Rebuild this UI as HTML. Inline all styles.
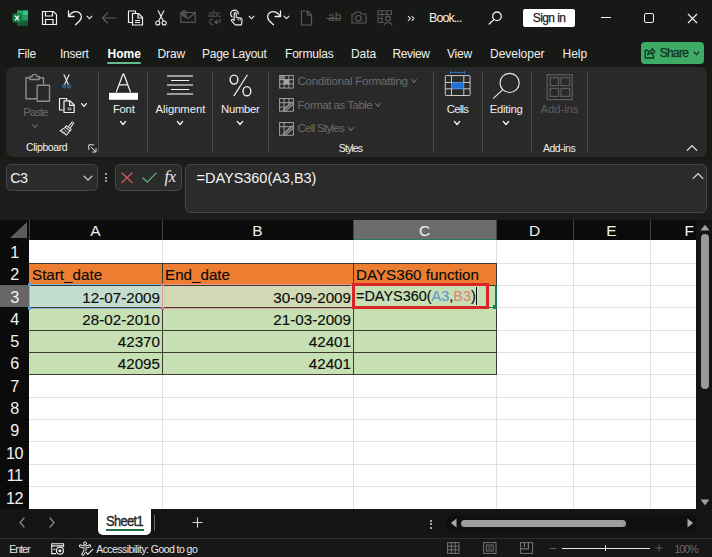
<!DOCTYPE html>
<html><head><meta charset="utf-8">
<style>
*{margin:0;padding:0;box-sizing:border-box}
html,body{width:712px;height:557px;overflow:hidden;background:#181a16;font-family:"Liberation Sans",sans-serif;}
#root{position:relative;width:712px;height:557px;overflow:hidden;background:#181a16;color:#fff}
.abs{position:absolute}
.t{position:absolute;white-space:nowrap;line-height:1}
/* title bar */
#title{left:0;top:0;width:712px;height:38px;background:#171916}
#tabs{left:0;top:38px;width:712px;height:30px;background:#171916}
.tab{font-size:13px;color:#f0f0f0;top:48px}
#ribbon{left:6px;top:67px;width:701px;height:90px;background:#292929;border-radius:7px}
.sep{position:absolute;width:1px;background:#4a4a4a;top:74px;height:81px}
.glabel{font-size:11px;color:#f0f0f0;top:143px}
.blabel{font-size:12px;color:#f0f0f0}
.dim{color:#6f6f6f}
/* formula bar */
#fbar{left:0;top:160px;width:712px;height:60px;background:#1c1d1a}
.fbox{position:absolute;background:#2b2b2b;border:1px solid #454545;border-radius:5px}
/* grid */
#grid{left:0;top:220px;width:696px;height:289px;background:#fff}
#colhdr{left:0;top:220px;width:712px;height:20px;background:#0b0b0b}
#rowhdr{left:0;top:240px;width:29px;height:269px;background:#0b0b0b}
.ch{position:absolute;top:220px;height:20px;color:#f2f2f2;font-size:15.5px;text-align:center;line-height:22px}
.rh{position:absolute;left:0;width:29px;color:#f2f2f2;font-size:16.2px;letter-spacing:-0.6px;text-align:center;line-height:22px;height:22px}
.vl{position:absolute;width:1px;background:#e0e0e0;top:240px;height:269px}
.hl{position:absolute;height:1px;background:#e0e0e0;left:29px;width:667px}
.cell{position:absolute;font-size:15.2px;color:#0c0c0c;-webkit-text-stroke-width:0.15px;line-height:22px;height:22px;white-space:nowrap}
#vscroll{left:696px;top:220px;width:16px;height:290px;background:#141414}
#sheetbar{left:0;top:509px;width:712px;height:29px;background:#141512}
#status{left:0;top:538px;width:712px;height:19px;background:#171717;border-top:1px solid #2e2e2e}
</style></head><body>
<div id="root">
<div id="title" class="abs"></div>
<div id="tabs" class="abs"></div>
<div id="ribbon" class="abs"></div>
<div id="fbar" class="abs"></div>
<div id="grid" class="abs"></div>
<div id="colhdr" class="abs"></div>
<div id="rowhdr" class="abs"></div>
<div id="vscroll" class="abs"></div>
<div id="sheetbar" class="abs"></div>
<div id="status" class="abs"></div>
<!--TITLE-->
<!-- excel logo -->
<svg class="abs" style="left:12px;top:10px" width="17" height="16" viewBox="0 0 17 16">
<rect x="5" y="0.5" width="11" height="15" rx="1" fill="#1d6f42"/>
<rect x="10.5" y="0.5" width="5.5" height="5" fill="#33c481"/><rect x="5" y="0.5" width="5.5" height="5" fill="#21a366"/>
<rect x="5" y="5.5" width="5.5" height="5" fill="#107c41"/><rect x="10.5" y="5.5" width="5.5" height="5" fill="#21a366"/>
<rect x="5" y="10.5" width="11" height="5" fill="#185c37"/>
<rect x="0.5" y="3.5" width="9" height="9" rx="1" fill="#107c41"/>
<path d="M3 5.6 L7 10.4 M7 5.6 L3 10.4" stroke="#fff" stroke-width="1.3" fill="none"/>
</svg>
<!-- save -->
<svg class="abs" style="left:41px;top:10px" width="17" height="16" viewBox="0 0 17 16" fill="none" stroke="#f0f0f0" stroke-width="1.2">
<path d="M1.5 1.5 H12.5 L15.5 4.5 V14.5 H1.5 Z"/><path d="M4.5 1.5 V6 H11.5 V1.5"/><path d="M4.5 14.5 V9.5 H12 V14.5"/>
</svg>
<!-- undo -->
<svg class="abs" style="left:67px;top:9px" width="17" height="17" viewBox="0 0 17 17" fill="none" stroke="#f0f0f0" stroke-width="1.3" stroke-linecap="round" stroke-linejoin="round">
<path d="M1.5 2 V7.5 H7"/><path d="M1.8 7.3 C4 3.5 8 1.5 11.5 3.2 C15 5 15.3 9.3 12.5 12 L8.5 15.8"/>
</svg>
<svg class="abs" style="left:86px;top:15px" width="7" height="5" viewBox="0 0 7 5" fill="none" stroke="#e0e0e0" stroke-width="1.2"><path d="M0.8 0.8 L3.5 3.6 L6.2 0.8"/></svg>
<!-- back arrow dim -->
<svg class="abs" style="left:101px;top:12px" width="16" height="12" viewBox="0 0 16 12" fill="none" stroke="#5a5a5a" stroke-width="1.2" stroke-linecap="round" stroke-linejoin="round"><path d="M15 6 H1.5 M6.5 1 L1.5 6 L6.5 11"/></svg>
<!-- copy -->
<svg class="abs" style="left:127px;top:10px" width="17" height="16" viewBox="0 0 17 16" fill="none" stroke="#f0f0f0" stroke-width="1.2" stroke-linejoin="round">
<path d="M5.5 12.5 H1.5 V1 H8.5 V3"/><path d="M5.5 3.5 H11.5 L15.5 7.5 V15 H5.5 Z" fill="#171916"/><path d="M11 3.8 V8 H15.2"/><path d="M8 10.5 H13 M8 12.5 H13" stroke-width="1"/>
</svg>
<!-- scissors -->
<svg class="abs" style="left:155px;top:10px" width="12" height="16" viewBox="0 0 12 16" fill="none" stroke="#f0f0f0" stroke-width="1.1" stroke-linecap="round">
<path d="M3.2 0.8 L8.3 11 M8.8 0.8 L3.7 11"/><circle cx="2.8" cy="13" r="2"/><circle cx="9.2" cy="13" r="2"/>
</svg>
<!-- mail dim -->
<svg class="abs" style="left:180px;top:10px" width="16" height="13" viewBox="0 0 16 13" fill="none" stroke="#585858" stroke-width="1.2">
<rect x="0.8" y="2.5" width="14.4" height="9.8"/><path d="M1 3 L8 8.5 L15 3"/><path d="M2.5 6.5 V2.5 C2.5 0 6 0 6 2.5 V6 C6 7.5 4 7.5 4 6 V3"/>
</svg>
<!-- abc dim -->
<div class="t" style="left:208px;top:10px;font-size:9px;color:#585858;letter-spacing:-0.6px">abc</div>
<svg class="abs" style="left:208px;top:18px" width="13" height="8" viewBox="0 0 13 8" fill="none" stroke="#585858" stroke-width="1.1" stroke-linecap="round"><path d="M4.5 1.2 C1 1 1 6.5 4.5 6.5 M12 1 V4 H7 M9 2 L7 4 L9 6"/></svg>
<!-- touch -->
<svg class="abs" style="left:229px;top:9px" width="15" height="17" viewBox="0 0 15 17" fill="none" stroke="#f0f0f0" stroke-width="1.15" stroke-linecap="round" stroke-linejoin="round">
<path d="M3.2 8 C1 6.5 1 2.5 3.8 1.5 C6.5 0.5 9.5 2.2 9.3 5"/>
<path d="M5.2 11.5 V4.6 C5.2 3.2 7.2 3.2 7.2 4.6 V8.2 L11.6 9 C12.8 9.3 13.3 10 13.1 11.2 L12.4 15.8 H6.3 L2.6 11.8 C2 10.8 3.2 9.8 4.2 10.6 Z"/>
<path d="M9.2 9 V11 M11.2 9.4 V11.2" stroke-width="0.9"/>
</svg>
<svg class="abs" style="left:248px;top:15px" width="7" height="5" viewBox="0 0 7 5" fill="none" stroke="#e0e0e0" stroke-width="1.2"><path d="M0.8 0.8 L3.5 3.6 L6.2 0.8"/></svg>
<!-- redo -->
<svg class="abs" style="left:265px;top:9px" width="17" height="17" viewBox="0 0 17 17" fill="none" stroke="#f0f0f0" stroke-width="1.3" stroke-linecap="round" stroke-linejoin="round">
<path d="M15.5 2 V7.5 H10"/><path d="M15.2 7.3 C13 3.5 9 1.5 5.5 3.2 C2 5 1.7 9.3 4.5 12 L8.5 15.8"/>
</svg>
<svg class="abs" style="left:283px;top:15px" width="7" height="5" viewBox="0 0 7 5" fill="none" stroke="#e0e0e0" stroke-width="1.2"><path d="M0.8 0.8 L3.5 3.6 L6.2 0.8"/></svg>
<!-- new doc dim -->
<svg class="abs" style="left:300px;top:10px" width="13" height="16" viewBox="0 0 13 16" fill="none" stroke="#585858" stroke-width="1.2" stroke-linejoin="round"><path d="M1.5 1 H7.5 L11.5 5 V15 H1.5 Z"/><path d="M7.3 1.2 V5.2 H11.3"/></svg>
<!-- ab strike dim -->
<div class="t" style="left:328px;top:11px;font-size:12px;color:#585858">ab</div>
<div class="abs" style="left:326px;top:18px;width:15px;height:1px;background:#585858"></div>
<!-- camera dim -->
<svg class="abs" style="left:351px;top:11px" width="16" height="13" viewBox="0 0 16 13" fill="none" stroke="#585858" stroke-width="1.2" stroke-linejoin="round"><path d="M1 3 H4 L5 1 H9 L10 3 H15 V12 H1 Z"/><circle cx="7.5" cy="7.3" r="2.8"/></svg>
<!-- table person dim -->
<svg class="abs" style="left:377px;top:10px" width="16" height="16" viewBox="0 0 16 16" fill="none" stroke="#585858" stroke-width="1.1"><path d="M7 12.5 H1 V0.8 H14.5 V5"/><path d="M1 4.5 H14.5 M1 8.5 H6 M5 0.8 V12.5 M9.8 0.8 V4.5"/><circle cx="11" cy="8.5" r="2.4"/><path d="M7 15.5 C7.5 11.5 14.5 11.5 15 15.5"/></svg>
<!-- chevrons -->
<svg class="abs" style="left:407px;top:15px" width="9" height="7" viewBox="0 0 9 7" fill="none" stroke="#e8e8e8" stroke-width="1.1"><path d="M1 1 L3.3 3.5 L1 6 M4.6 1 L6.9 3.5 L4.6 6"/></svg>
<div class="t" style="left:429px;top:12px;font-size:12.5px;color:#f0f0f0;letter-spacing:-0.92px;">Book...</div>
<!-- search -->
<svg class="abs" style="left:488px;top:11px" width="15" height="14" viewBox="0 0 15 14" fill="none" stroke="#f0f0f0" stroke-width="1.3" stroke-linecap="round"><circle cx="9" cy="5.3" r="4.3"/><path d="M5.8 8.6 L1.2 13"/></svg>
<!-- sign in -->
<div class="abs" style="left:523px;top:9px;width:52px;height:18px;background:#fff;border-radius:2px"></div>
<div class="t" style="left:532.8px;top:12.3px;font-size:12px;color:#1e1e1e;letter-spacing:-0.60px;-webkit-text-stroke:0.25px #1e1e1e;">Sign in</div>
<!-- window controls -->
<div class="abs" style="left:601px;top:17px;width:10px;height:1px;background:#f0f0f0"></div>
<div class="abs" style="left:644px;top:13px;width:10px;height:10px;border:1.2px solid #f0f0f0;border-radius:2px"></div>
<svg class="abs" style="left:687px;top:13px" width="11" height="11" viewBox="0 0 11 11" fill="none" stroke="#f0f0f0" stroke-width="1.2"><path d="M1 1 L10 10 M10 1 L1 10"/></svg>

<!--/TITLE-->
<!--TABS-->
<div class="t" style="left:17.5px;top:48.3px;font-size:12px;color:#f0f0f0;letter-spacing:-0.21px;">File</div>
<div class="t" style="left:60px;top:48.3px;font-size:12px;color:#f0f0f0;letter-spacing:-0.25px;">Insert</div>
<div class="t" style="left:157.5px;top:48.3px;font-size:12px;color:#f0f0f0;letter-spacing:-0.13px;">Draw</div>
<div class="t" style="left:202px;top:48.3px;font-size:12px;color:#f0f0f0;letter-spacing:-0.26px;">Page Layout</div>
<div class="t" style="left:285px;top:48.3px;font-size:12px;color:#f0f0f0;letter-spacing:-0.19px;">Formulas</div>
<div class="t" style="left:351px;top:48.3px;font-size:12px;color:#f0f0f0;letter-spacing:-0.09px;">Data</div>
<div class="t" style="left:392.5px;top:48.3px;font-size:12px;color:#f0f0f0;letter-spacing:-0.39px;">Review</div>
<div class="t" style="left:447px;top:48.3px;font-size:12px;color:#f0f0f0;letter-spacing:-0.20px;">View</div>
<div class="t" style="left:490px;top:48.3px;font-size:12px;color:#f0f0f0;letter-spacing:-0.02px;">Developer</div>
<div class="t" style="left:562.5px;top:48.3px;font-size:12px;color:#f0f0f0;letter-spacing:-0.04px;">Help</div>
<div class="t" style="left:107.5px;top:48.3px;font-size:12px;color:#ffffff;font-weight:bold;letter-spacing:0.04px;">Home</div>
<div class="abs" style="left:107px;top:62px;width:34px;height:2px;background:#63bd8c;border-radius:1px"></div>
<div class="abs" style="left:640.5px;top:42px;width:63px;height:21.5px;background:#3eab67;border-radius:4px"></div>
<svg class="abs" style="left:644px;top:47px" width="12" height="12" viewBox="0 0 12 12" fill="none" stroke="#10331f" stroke-width="1.3" stroke-linejoin="round" stroke-linecap="round"><path d="M4 3.5 H1.2 V11 H9.5 V8.5"/><path d="M3.8 8 C4 5 6 3.6 8 3.6 V1.5 L11 4.6 L8 7.6 V5.6 C6.3 5.6 5 6.2 3.8 8 Z"/></svg>
<div class="t" style="left:659.8px;top:47.3px;font-size:12px;color:#10331f;letter-spacing:-0.70px;-webkit-text-stroke:0.3px #10331f;">Share</div>
<svg class="abs" style="left:692.5px;top:51px" width="7" height="5" viewBox="0 0 7 5" fill="none" stroke="#10331f" stroke-width="1.3"><path d="M0.8 0.8 L3.5 3.6 L6.2 0.8"/></svg>
<!--/TABS-->
<!--RIBBON-->
<div class="sep" style="left:98px;top:71px;height:81px"></div>
<div class="sep" style="left:147px;top:71px;height:81px"></div>
<div class="sep" style="left:212px;top:71px;height:81px"></div>
<div class="sep" style="left:268px;top:71px;height:81px"></div>
<div class="sep" style="left:433px;top:71px;height:81px"></div>
<div class="sep" style="left:482px;top:71px;height:81px"></div>
<div class="sep" style="left:531px;top:71px;height:81px"></div>
<div class="sep" style="left:587px;top:71px;height:81px"></div>
<svg class="abs" style="left:24px;top:73px" width="27" height="30" viewBox="0 0 27 30" fill="none" stroke="#8c8c8c" stroke-width="1.4" stroke-linejoin="round"><path d="M13 25.8 H2 V4.8 H6 M15 4.8 H19.5 V11.5"/><path d="M5.8 6.5 V3.5 H8.2 C8.2 0.6 12.8 0.6 12.8 3.5 H15.2 V6.5 Z"/><rect x="13.2" y="12.2" width="12.3" height="16" fill="#292929"/></svg>
<div class="t" style="left:23.3px;top:106.8px;font-size:11.3px;color:#6a6a6a;letter-spacing:-0.96px;">Paste</div>
<svg class="abs" style="left:30.799999999999997px;top:123px" width="8" height="6" viewBox="0 0 8 6" fill="none" stroke="#6a6a6a" stroke-width="1.1" stroke-linecap="round" stroke-linejoin="round"><path d="M1.7000000000000002 1.7 L4 4.3 L6.3 1.7"/></svg>
<svg class="abs" style="left:61px;top:74px" width="11" height="15" viewBox="0 0 11 15" fill="none" stroke-linecap="round"><path d="M3 0.8 L7.4 10.6 M8 0.8 L3.6 10.6" stroke="#f0f0f0" stroke-width="1.1"/><circle cx="3" cy="12.4" r="1.6" stroke="#3b86c8" stroke-width="1"/><circle cx="8" cy="12.4" r="1.6" stroke="#3b86c8" stroke-width="1"/></svg>
<svg class="abs" style="left:58px;top:96.5px" width="18" height="17" viewBox="0 0 18 17" fill="none" stroke="#f0f0f0" stroke-width="1.2" stroke-linejoin="round"><path d="M5.8 13 H1.5 V1.5 H8.8 V3.4"/><path d="M6 3.8 H12 L16.2 8 V15.5 H6 Z" fill="#292929"/><path d="M11.6 4 V8.4 H16"/><rect x="9.5" y="10.5" width="4" height="3" fill="#8c8c8c" stroke="none"/></svg>
<svg class="abs" style="left:79.7px;top:102.2px" width="8" height="6" viewBox="0 0 8 6" fill="none" stroke="#f0f0f0" stroke-width="1.3" stroke-linecap="round" stroke-linejoin="round"><path d="M1.6 1.6 L4 4.4 L6.4 1.6"/></svg>
<svg class="abs" style="left:59px;top:120.5px" width="16" height="15" viewBox="0 0 17 16" fill="none" stroke="#e8e8e8" stroke-width="1.1" stroke-linejoin="round" stroke-linecap="round"><path d="M10.2 5.6 L13.6 1.4 C14.4 0.6 16 1.8 15.3 2.8 L12 7"/><path d="M7.6 5 L13 9 L11.8 10.6 L6.4 6.6 Z"/><path d="M6.2 7 L1.2 10.4 L8 15 L11.4 10.6"/><path d="M3.6 10.8 L6.4 12.8 M5.8 9.4 L8.6 11.4" stroke-width="0.8"/></svg>
<div class="t" style="left:26px;top:142.3px;font-size:10.5px;color:#f0f0f0;letter-spacing:-0.42px;">Clipboard</div>
<svg class="abs" style="left:88px;top:144px" width="9" height="9" viewBox="0 0 9 9" fill="none" stroke="#e0e0e0" stroke-width="1"><path d="M0.8 6 V0.8 H6"/><path d="M3 3 L7.8 7.8 M8 4.2 V8 H4.2"/></svg>
<svg class="abs" style="left:108px;top:72px" width="32" height="29" viewBox="0 0 32 29"><path d="M8.2 20.4 L14.9 2.2 H15.9 L22.6 20.4 M10.6 12.9 H20.2" fill="none" stroke="#f0f0f0" stroke-width="1.3" stroke-linejoin="round"/><rect x="1" y="20.8" width="29" height="7" fill="#fff"/></svg>
<div class="t" style="left:113px;top:103.9px;font-size:11.3px;color:#f0f0f0;letter-spacing:-0.28px;">Font</div>
<svg class="abs" style="left:119px;top:120.3px" width="8" height="6" viewBox="0 0 8 6" fill="none" stroke="#f0f0f0" stroke-width="1.3" stroke-linecap="round" stroke-linejoin="round"><path d="M1.4 1.5 L4 4.5 L6.6 1.5"/></svg>
<svg class="abs" style="left:166px;top:73px" width="29" height="24" viewBox="0 0 29 24"><path d="M1 3 H27 M1 12 H27 M1 21 H27" stroke="#9c9c9c" stroke-width="1.8"/><path d="M5 7.5 H23.2 M5 16.5 H23.2" stroke="#f2f2f2" stroke-width="1.1"/></svg>
<div class="t" style="left:155.5px;top:103.9px;font-size:11.3px;color:#f0f0f0;letter-spacing:-0.05px;">Alignment</div>
<svg class="abs" style="left:175.8px;top:120.3px" width="8" height="6" viewBox="0 0 8 6" fill="none" stroke="#f0f0f0" stroke-width="1.3" stroke-linecap="round" stroke-linejoin="round"><path d="M1.4 1.5 L4 4.5 L6.6 1.5"/></svg>
<svg class="abs" style="left:228px;top:72px" width="25" height="27" viewBox="0 0 25 27" fill="none" stroke="#f0f0f0" stroke-width="1.4"><ellipse cx="6" cy="7.6" rx="3.9" ry="4.5"/><ellipse cx="18.9" cy="19.2" rx="3.9" ry="4.6"/><path d="M19.4 2.7 L5.8 24.1" stroke-width="1.2"/></svg>
<div class="t" style="left:221px;top:103.9px;font-size:11.3px;color:#f0f0f0;letter-spacing:-0.26px;">Number</div>
<svg class="abs" style="left:236px;top:120.3px" width="8" height="6" viewBox="0 0 8 6" fill="none" stroke="#f0f0f0" stroke-width="1.3" stroke-linecap="round" stroke-linejoin="round"><path d="M1.4 1.5 L4 4.5 L6.6 1.5"/></svg>
<svg class="abs" style="left:279px;top:74.5px" width="15.2" height="14" viewBox="0 0 16 15" fill="none" stroke="#a6a6a6" stroke-width="1"><rect x="0.6" y="0.6" width="14.6" height="13.4"/><path d="M0.6 5 H15.2 M0.6 9.6 H15.2 M5.4 0.6 V14 M10.4 0.6 V14"/><rect x="5.4" y="5" width="5" height="4.6" fill="#a6a6a6"/><rect x="1" y="1" width="4" height="4" fill="#a6a6a6" opacity=".7"/></svg>
<div class="t" style="left:297.5px;top:76.3px;font-size:11.5px;color:#6c6c6c;letter-spacing:-0.25px;">Conditional Formatting</div>
<svg class="abs" style="left:410.4px;top:78.4px" width="8" height="6" viewBox="0 0 8 6" fill="none" stroke="#6c6c6c" stroke-width="1.1" stroke-linecap="round" stroke-linejoin="round"><path d="M1.6 1.7 L4 4.3 L6.4 1.7"/></svg>
<svg class="abs" style="left:279px;top:98px" width="15.2" height="14.2" viewBox="0 0 16 15" fill="none" stroke="#a6a6a6" stroke-width="1"><rect x="0.6" y="0.6" width="14.6" height="13.4"/><path d="M0.6 5 H15.2 M0.6 9.6 H8 M5.4 0.6 V14 M10.4 0.6 V6"/><path d="M4.4 12.6 L13.2 4.4 L15.2 6.4 L6.6 14.2 Z" fill="#292929" stroke-width="1.1"/><path d="M5.6 13 L13 6.2" stroke-width="0.9"/></svg>
<div class="t" style="left:297.5px;top:99.7px;font-size:11.5px;color:#6c6c6c;letter-spacing:-0.50px;">Format as Table</div>
<svg class="abs" style="left:374.4px;top:102px" width="8" height="6" viewBox="0 0 8 6" fill="none" stroke="#6c6c6c" stroke-width="1.1" stroke-linecap="round" stroke-linejoin="round"><path d="M1.6 1.7 L4 4.3 L6.4 1.7"/></svg>
<svg class="abs" style="left:279px;top:122px" width="15.2" height="14.2" viewBox="0 0 16 15" fill="none" stroke="#a6a6a6" stroke-width="1"><rect x="0.6" y="0.6" width="14.6" height="13.4"/><path d="M0.6 5 H15.2 M5.4 0.6 V14"/><path d="M4.4 12.6 L13.2 4.4 L15.2 6.4 L6.6 14.2 Z" fill="#292929" stroke-width="1.1"/><path d="M5.6 13 L13 6.2" stroke-width="0.9"/></svg>
<div class="t" style="left:297.5px;top:123.3px;font-size:11.5px;color:#6c6c6c;letter-spacing:-0.71px;">Cell Styles</div>
<svg class="abs" style="left:346.5px;top:125.69999999999999px" width="8" height="6" viewBox="0 0 8 6" fill="none" stroke="#6c6c6c" stroke-width="1.1" stroke-linecap="round" stroke-linejoin="round"><path d="M1.6 1.7 L4 4.3 L6.4 1.7"/></svg>
<div class="t" style="left:338.8px;top:143px;font-size:10.5px;color:#f0f0f0;letter-spacing:-0.90px;">Styles</div>
<svg class="abs" style="left:444px;top:70px" width="28" height="27" viewBox="0 0 28 27" fill="none"><path d="M6.4 2.4 H20.6 M6.4 0.9 V3.9 M20.6 0.9 V3.9" stroke="#2f78c4" stroke-width="1"/><rect x="7.5" y="12.5" width="12.3" height="6.3" fill="#1f72d4" stroke="#62a8ee" stroke-width="0.8"/><g stroke="#c8c8c8" stroke-width="1"><rect x="1.3" y="5.6" width="24.8" height="19.9" rx="0.8"/><path d="M1.3 12.5 H7.5 M19.8 12.5 H26.1 M1.3 18.8 H7.5 M19.8 18.8 H26.1 M7.5 5.6 V12.5 M7.5 18.8 V25.5 M19.8 5.6 V12.5 M19.8 18.8 V25.5"/></g></svg>
<div class="t" style="left:446.8px;top:103.9px;font-size:11.3px;color:#f0f0f0;letter-spacing:-0.74px;">Cells</div>
<svg class="abs" style="left:453.2px;top:120.3px" width="8" height="6" viewBox="0 0 8 6" fill="none" stroke="#f0f0f0" stroke-width="1.3" stroke-linecap="round" stroke-linejoin="round"><path d="M1.4 1.5 L4 4.5 L6.6 1.5"/></svg>
<svg class="abs" style="left:492px;top:71px" width="30" height="29" viewBox="0 0 30 29" fill="none" stroke="#e8e8e8" stroke-width="1.15" stroke-linecap="round"><circle cx="17.6" cy="11.9" r="9.6"/><path d="M10.6 18.8 L1.6 27.2"/></svg>
<div class="t" style="left:489.8px;top:103.9px;font-size:11.3px;color:#f0f0f0;letter-spacing:-0.25px;">Editing</div>
<svg class="abs" style="left:502.2px;top:120.3px" width="8" height="6" viewBox="0 0 8 6" fill="none" stroke="#f0f0f0" stroke-width="1.3" stroke-linecap="round" stroke-linejoin="round"><path d="M1.4 1.5 L4 4.5 L6.6 1.5"/></svg>
<svg class="abs" style="left:546px;top:74px" width="28" height="27" viewBox="0 0 28 27" fill="none" stroke="#5c5c5c" stroke-width="1.2"><rect x="1.2" y="0.8" width="25" height="24.8"/><rect x="4.2" y="3.6" width="8.4" height="8"/><rect x="15" y="3.6" width="8.6" height="8"/><rect x="4.2" y="14.4" width="8.4" height="8"/><rect x="15" y="14.4" width="8.6" height="8"/></svg>
<div class="t" style="left:540.6px;top:103.9px;font-size:11.3px;color:#5e5e5e;letter-spacing:-0.07px;">Add-ins</div>
<div class="t" style="left:543px;top:143px;font-size:10.5px;color:#f0f0f0;letter-spacing:-0.49px;">Add-ins</div>
<svg class="abs" style="left:686px;top:144px" width="12" height="8" viewBox="0 0 12 8" fill="none" stroke="#e8e8e8" stroke-width="1.3" stroke-linecap="round" stroke-linejoin="round"><path d="M1.2 6.4 L6 1.6 L10.8 6.4"/></svg>
<!--/RIBBON-->
<!--FBAR-->
<div class="fbox" style="left:6px;top:164px;width:92px;height:27px"></div>
<div class="t" style="left:10.3px;top:171px;font-size:14.3px;color:#f4f4f4;letter-spacing:-0.69px;">C3</div>
<svg class="abs" style="left:83px;top:175px" width="10" height="7" viewBox="0 0 10 7" fill="none" stroke="#d8d8d8" stroke-width="1.2" stroke-linecap="round" stroke-linejoin="round"><path d="M1 1.2 L5 5.2 L9 1.2"/></svg>
<div class="abs" style="left:105.3px;top:172.8px;width:2px;height:2px;background:#c8c8c8;border-radius:1px"></div>
<div class="abs" style="left:105.3px;top:176.6px;width:2px;height:2px;background:#c8c8c8;border-radius:1px"></div>
<div class="abs" style="left:105.3px;top:180.4px;width:2px;height:2px;background:#c8c8c8;border-radius:1px"></div>
<div class="fbox" style="left:115px;top:164px;width:67px;height:27px"></div>
<svg class="abs" style="left:121px;top:172px" width="12" height="11.5" viewBox="0 0 13 12" fill="none" stroke="#d85a5a" stroke-width="1.3" stroke-linecap="round"><path d="M1 0.8 L12 11.2 M12 0.8 L1 11.2"/></svg>
<svg class="abs" style="left:141.5px;top:171.5px" width="15" height="11.5" viewBox="0 0 16 12" fill="none" stroke="#58b87c" stroke-width="1.3" stroke-linecap="round" stroke-linejoin="round"><path d="M1 6.2 L5.6 10.6 L15 1"/></svg>
<div class="t" style="left:164.5px;top:169px;font-family:'Liberation Serif',serif;font-style:italic;font-size:16.5px;color:#ececec;letter-spacing:-0.3px">fx</div>
<div class="fbox" style="left:185px;top:164px;width:522px;height:49px"></div>
<div class="t" style="left:196.5px;top:171.3px;font-size:14.5px;color:#f4f4f4;letter-spacing:-0.02px;">=DAYS360(A3,B3)</div>
<svg class="abs" style="left:692px;top:172px" width="12" height="8" viewBox="0 0 12 8" fill="none" stroke="#e0e0e0" stroke-width="1.3" stroke-linecap="round" stroke-linejoin="round"><path d="M1.2 6.4 L6 1.6 L10.8 6.4"/></svg>
<!--/FBAR-->
<!--GRID-->
<div class="ch" style="left:29px;width:133px">A</div>
<div class="ch" style="left:162px;width:191px">B</div>
<div class="abs" style="left:353px;top:220px;width:143px;height:20px;background:#6c6c6c;border-bottom:1px solid #2a7d55"></div>
<div class="ch" style="left:353px;width:143px">C</div>
<div class="ch" style="left:496px;width:77px">D</div>
<div class="ch" style="left:573px;width:77px">E</div>
<div class="ch" style="left:650px;width:46px;text-align:right;padding-right:2px">F</div>
<div class="abs" style="left:29px;top:220px;width:1px;height:20px;background:#444"></div>
<div class="abs" style="left:162px;top:220px;width:1px;height:20px;background:#444"></div>
<div class="abs" style="left:353px;top:220px;width:1px;height:20px;background:#444"></div>
<div class="abs" style="left:496px;top:220px;width:1px;height:20px;background:#444"></div>
<div class="abs" style="left:573px;top:220px;width:1px;height:20px;background:#444"></div>
<div class="abs" style="left:650px;top:220px;width:1px;height:20px;background:#444"></div>
<svg class="abs" style="left:9px;top:222px" width="19" height="17"><polygon points="18,0 18,16 1,16" fill="#5c5c5c"/></svg>
<div class="rh" style="top:240px;height:23px;line-height:24px">1</div>
<div class="rh" style="top:263px;height:22px;line-height:23px">2</div>
<div class="abs" style="left:0;top:285px;width:29px;height:22px;background:#666"></div>
<div class="rh" style="top:286px;height:22px;line-height:23px">3</div>
<div class="rh" style="top:307px;height:23px;line-height:24px">4</div>
<div class="rh" style="top:330px;height:22px;line-height:23px">5</div>
<div class="rh" style="top:352px;height:22px;line-height:23px">6</div>
<div class="rh" style="top:374px;height:23px;line-height:24px">7</div>
<div class="rh" style="top:397px;height:22px;line-height:23px">8</div>
<div class="rh" style="top:419px;height:22px;line-height:23px">9</div>
<div class="rh" style="top:441px;height:23px;line-height:24px">10</div>
<div class="rh" style="top:464px;height:22px;line-height:23px">11</div>
<div class="rh" style="top:486px;height:23px;line-height:24px">12</div>
<div class="abs" style="left:29px;top:263px;width:133px;height:22px;background:#ed7d31"></div>
<div class="abs" style="left:29px;top:285px;width:133px;height:89px;background:#c6e0b4"></div>
<div class="abs" style="left:162px;top:263px;width:191px;height:22px;background:#ed7d31"></div>
<div class="abs" style="left:162px;top:285px;width:191px;height:89px;background:#c6e0b4"></div>
<div class="abs" style="left:353px;top:263px;width:143px;height:22px;background:#ed7d31"></div>
<div class="abs" style="left:353px;top:285px;width:143px;height:89px;background:#c6e0b4"></div>
<div class="abs" style="left:29px;top:285px;width:133px;height:22px;background:#c3dcd0"></div>
<div class="abs" style="left:162px;top:285px;width:191px;height:22px;background:#d0d8b4"></div>
<div class="vl" style="left:162px"></div>
<div class="vl" style="left:353px"></div>
<div class="vl" style="left:496px"></div>
<div class="vl" style="left:573px"></div>
<div class="vl" style="left:650px"></div>
<div class="hl" style="top:263px;width:667px"></div>
<div class="hl" style="top:285px;width:667px"></div>
<div class="hl" style="top:307px;width:667px"></div>
<div class="hl" style="top:330px;width:667px"></div>
<div class="hl" style="top:352px;width:667px"></div>
<div class="hl" style="top:374px;width:667px"></div>
<div class="hl" style="top:397px;width:667px"></div>
<div class="hl" style="top:419px;width:667px"></div>
<div class="hl" style="top:441px;width:667px"></div>
<div class="hl" style="top:464px;width:667px"></div>
<div class="hl" style="top:486px;width:667px"></div>
<div class="abs" style="left:29px;top:263px;width:468px;height:1px;background:#3d3d2d"></div>
<div class="abs" style="left:29px;top:285px;width:468px;height:1px;background:#3d3d2d"></div>
<div class="abs" style="left:29px;top:307px;width:468px;height:1px;background:#3d3d2d"></div>
<div class="abs" style="left:29px;top:330px;width:468px;height:1px;background:#3d3d2d"></div>
<div class="abs" style="left:29px;top:352px;width:468px;height:1px;background:#3d3d2d"></div>
<div class="abs" style="left:29px;top:374px;width:468px;height:1px;background:#3d3d2d"></div>
<div class="abs" style="left:162px;top:263px;width:1px;height:111px;background:#3d3d2d"></div>
<div class="abs" style="left:353px;top:263px;width:1px;height:111px;background:#3d3d2d"></div>
<div class="abs" style="left:496px;top:263px;width:1px;height:111px;background:#3d3d2d"></div>
<div class="cell" style="left:29px;top:263px;width:133px;text-align:left;padding-left:3px;line-height:24px;color:#0c0c0c">Start_date</div>
<div class="cell" style="left:162px;top:263px;width:191px;text-align:left;padding-left:3px;line-height:24px;color:#0c0c0c">End_date</div>
<div class="cell" style="left:353px;top:263px;width:143px;text-align:left;padding-left:3px;line-height:24px;color:#0c0c0c">DAYS360 function</div>
<div class="cell" style="left:29px;top:286px;width:133px;text-align:right;padding-right:2px;line-height:24px;color:#0c0c0c">12-07-2009</div>
<div class="cell" style="left:162px;top:286px;width:191px;text-align:right;padding-right:2px;line-height:24px;color:#0c0c0c">30-09-2009</div>
<div class="cell" style="left:29px;top:307px;width:133px;text-align:right;padding-right:2px;line-height:25px;color:#0c0c0c">28-02-2010</div>
<div class="cell" style="left:162px;top:307px;width:191px;text-align:right;padding-right:2px;line-height:25px;color:#0c0c0c">21-03-2009</div>
<div class="cell" style="left:29px;top:330px;width:133px;text-align:right;padding-right:2px;line-height:24px;color:#0c0c0c">42370</div>
<div class="cell" style="left:162px;top:330px;width:191px;text-align:right;padding-right:2px;line-height:24px;color:#0c0c0c">42401</div>
<div class="cell" style="left:29px;top:352px;width:133px;text-align:right;padding-right:2px;line-height:24px;color:#0c0c0c">42095</div>
<div class="cell" style="left:162px;top:352px;width:191px;text-align:right;padding-right:2px;line-height:24px;color:#0c0c0c">42401</div>
<div class="abs" style="left:29px;top:284px;width:134px;height:25px;border:1px solid #7fb3e6"></div>
<div class="abs" style="left:162px;top:284px;width:192px;height:25px;border:1px solid #e89a9a"></div>
<div class="abs" style="left:28px;top:283px;width:3px;height:3px;background:#5b9bd5"></div>
<div class="abs" style="left:28px;top:307px;width:3px;height:3px;background:#5b9bd5"></div>
<div class="abs" style="left:161px;top:283px;width:3px;height:3px;background:#e0707c"></div>
<div class="abs" style="left:161px;top:307px;width:3px;height:3px;background:#e0707c"></div>
<div class="abs" style="left:351px;top:283px;width:3px;height:3px;background:#e0707c"></div>
<div class="abs" style="left:495px;top:285px;width:2px;height:22px;background:#1f7a4d"></div>
<div class="abs" style="left:353px;top:307px;width:144px;height:1px;background:#1f7a4d"></div>
<div class="abs" style="left:352px;top:283px;width:137px;height:26px;border:3px solid #d92626;background:#c6e0b4"></div>
<div class="abs" style="left:476px;top:287px;width:1px;height:18px;background:#111"></div>
<div class="abs" style="left:493px;top:305px;width:4px;height:4px;background:#1f7a4d;border:0"></div>
<div class="cell" style="left:356px;top:284px;line-height:24px;font-size:14.45px">=DAYS360(<span style="color:#5b9bd5">A3</span>,<span style="color:#e0847c">B3</span>)</div>
<!--/GRID-->
<!--SHEETBAR-->
<svg class="abs" style="left:700px;top:224px" width="10" height="7" viewBox="0 0 10 7"><path d="M0.5 6.5 L5 0.8 L9.5 6.5 Z" fill="#a0a0a0"/></svg>
<div class="abs" style="left:701px;top:234px;width:8px;height:155px;background:#9a9a9a;border-radius:4px"></div>
<svg class="abs" style="left:700px;top:499px" width="10" height="7" viewBox="0 0 10 7"><path d="M0.5 0.5 L5 6.2 L9.5 0.5 Z" fill="#a0a0a0"/></svg>
<svg class="abs" style="left:19px;top:517px" width="6" height="11" viewBox="0 0 6 11" fill="none" stroke="#8c8c8c" stroke-width="1.2" stroke-linecap="round" stroke-linejoin="round"><path d="M5 1 L1 5.5 L5 10"/></svg>
<svg class="abs" style="left:48.5px;top:517px" width="6" height="11" viewBox="0 0 6 11" fill="none" stroke="#8c8c8c" stroke-width="1.2" stroke-linecap="round" stroke-linejoin="round"><path d="M1 1 L5 5.5 L1 10"/></svg>
<div class="abs" style="left:98.3px;top:509px;width:53px;height:25.5px;background:#fff;border-radius:0 0 5px 5px"></div>
<div class="t" style="left:106.4px;top:513.6px;font-size:14.6px;color:#262626;letter-spacing:-0.72px;-webkit-text-stroke:0.4px #262626;transform:scaleX(0.88);transform-origin:0 0;">Sheet1</div>
<div class="abs" style="left:106px;top:529px;width:37.5px;height:2px;background:#1e7145"></div>
<div class="abs" style="left:154px;top:515px;width:1px;height:16px;background:#6a6a6a"></div>
<svg class="abs" style="left:192px;top:517px" width="11" height="11" viewBox="0 0 11 11" stroke="#d0d0d0" stroke-width="1.2"><path d="M5.5 0.5 V10.5 M0.5 5.5 H10.5"/></svg>
<div class="abs" style="left:430px;top:519.5px;width:2px;height:2px;background:#d0d0d0;border-radius:1px"></div>
<div class="abs" style="left:430px;top:523px;width:2px;height:2px;background:#d0d0d0;border-radius:1px"></div>
<div class="abs" style="left:430px;top:526.5px;width:2px;height:2px;background:#d0d0d0;border-radius:1px"></div>
<div class="abs" style="left:446px;top:515px;width:250px;height:15.5px;background:#0f0f0f;border-radius:8px 0 0 8px"></div>
<svg class="abs" style="left:450px;top:518px" width="7" height="10" viewBox="0 0 7 10"><path d="M6.5 0.5 L0.8 5 L6.5 9.5 Z" fill="#a8a8a8"/></svg>
<div class="abs" style="left:461px;top:519.5px;width:165px;height:7.5px;background:#9d9d9d;border-radius:4px"></div>
<svg class="abs" style="left:686.5px;top:518px" width="7" height="10" viewBox="0 0 7 10"><path d="M0.5 0.5 L6.2 5 L0.5 9.5 Z" fill="#a8a8a8"/></svg>
<!--/SHEETBAR-->
<!--STATUS-->
<div class="t" style="left:9.2px;top:543.8px;font-size:10.5px;color:#e8e8e8;letter-spacing:-0.90px;">Enter</div>
<svg class="abs" style="left:51px;top:543px" width="15" height="13" viewBox="0 0 15 13" fill="none" stroke="#ececec" stroke-width="1.1"><path d="M5.2 10.6 H0.7 V0.7 H12.6 V4"/><path d="M0.7 2.9 H12.6 M2 6.3 H4.6"/><circle cx="8.9" cy="7.7" r="3.5" fill="#171717" stroke-width="1.2"/><circle cx="8.9" cy="7.7" r="1.5" fill="#ececec" stroke="none"/></svg>
<svg class="abs" style="left:79px;top:541px" width="15" height="15" viewBox="0 0 15 15" fill="none" stroke-linecap="round" stroke-linejoin="round"><path d="M1.4 4.9 C3 5.7 5 6 6 6 C7 6 9 5.7 10.6 4.9 M6 6 V9.4 L3.9 13.3" stroke="#ececec" stroke-width="3"/><path d="M1.4 4.9 C3 5.7 5 6 6 6 C7 6 9 5.7 10.6 4.9 M6 6 V9.4 L3.9 13.3" stroke="#171717" stroke-width="1.1"/><circle cx="6" cy="2.4" r="1.5" stroke="#ececec" stroke-width="1"/><path d="M6.6 11.2 L8.8 13.4 L13.7 8.4" stroke="#171717" stroke-width="2.6"/><path d="M6.6 11.2 L8.8 13.4 L13.7 8.4" stroke="#ececec" stroke-width="1.1"/></svg>
<div class="t" style="left:96.2px;top:543.8px;font-size:10.5px;color:#e8e8e8;letter-spacing:-0.56px;">Accessibility: Good to go</div>
<svg class="abs" style="left:447px;top:542px" width="13" height="12" viewBox="0 0 13 12" fill="none" stroke="#747474" stroke-width="1"><rect x="0.6" y="0.6" width="11.4" height="10.8"/><path d="M0.6 4.2 H12 M0.6 7.8 H12 M4.4 0.6 V11.4 M8.2 0.6 V11.4"/></svg>
<svg class="abs" style="left:483px;top:542px" width="14" height="12" viewBox="0 0 14 12" fill="none" stroke="#747474" stroke-width="1"><rect x="0.6" y="0.6" width="12.4" height="10.8"/><rect x="3.4" y="3" width="6.8" height="6"/><path d="M5 5 H8.6 M5 7 H8.6" stroke-width="0.8"/></svg>
<svg class="abs" style="left:519.5px;top:542px" width="14" height="12" viewBox="0 0 14 12" fill="none" stroke="#747474" stroke-width="1"><rect x="0.6" y="0.6" width="12" height="10.8"/><path d="M0.6 6.8 H8.4 V0.6 M4.4 0.6 V5" stroke-width="1.2"/></svg>
<div class="abs" style="left:549.5px;top:547.5px;width:6px;height:1px;background:#5e5e5e"></div>
<div class="abs" style="left:561.5px;top:547.5px;width:88.5px;height:1px;background:#e8e8e8"></div>
<div class="abs" style="left:605px;top:545px;width:1px;height:6px;background:#e8e8e8"></div>
<svg class="abs" style="left:654.5px;top:544px" width="8" height="8" viewBox="0 0 8 8" stroke="#5e5e5e" stroke-width="1"><path d="M4 0.5 V7.5 M0.5 4 H7.5"/></svg>
<div class="t" style="left:674.4px;top:543.8px;font-size:10.5px;color:#6c6c6c;letter-spacing:-0.86px;">100%</div>
<!--/STATUS-->
</div>
</body></html>
